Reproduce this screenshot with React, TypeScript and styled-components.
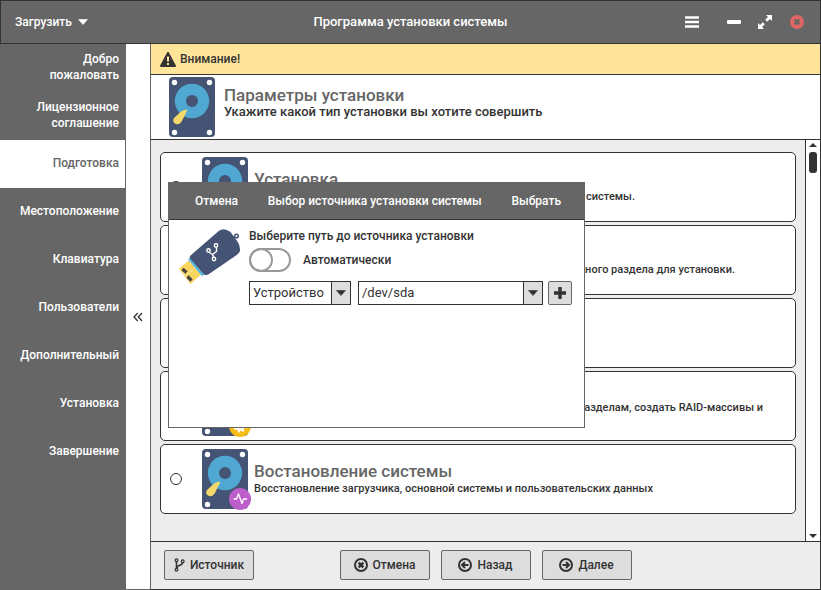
import React, { ReactNode, useState } from "react";
import styled, { createGlobalStyle } from "styled-components";

const ink = "#333333";
const gray = "#666666";
const panel = "#ededed";
const control = "#dddddd";

const GlobalStyle = createGlobalStyle`
  *, *::before, *::after { box-sizing: border-box; }
  html, body, #root { height: 100%; }
  body { margin: 0; background: #fff; }
  body, button, input, select {
    font-family: Roboto, "Noto Sans", sans-serif;
    font-size: 13px;
    font-weight: 500;
    line-height: 16px;
    color: ${ink};
  }
  h1, h2, p { margin: 0; }
  svg { display: block; flex: none; }
`;

const Window = styled.div`
  display: flex;
  flex-direction: column;
  height: 100%;
`;

const TitleBar = styled.header`
  display: grid;
  grid-template-columns: 1fr auto 1fr;
  align-items: center;
  flex: none;
  height: 44px;
  padding: 0 14px;
  color: #fff;
  background: ${gray};
  border: 1px solid ${ink};
`;

const PlainButton = styled.button`
  display: flex;
  align-items: center;
  gap: 6px;
  padding: 0;
  border: 0;
  background: none;
  font-size: 12px;
  color: inherit;
  cursor: pointer;
`;

const WindowTitle = styled.h1`
  font-size: 13px;
  font-weight: 500;
  line-height: 16px;
`;

const WindowControls = styled.div`
  display: flex;
  align-items: center;
  justify-content: flex-end;
  gap: 16px;
  padding-right: 1px;
`;

const MenuButton = styled(PlainButton)`
  margin-right: 12px;
`;

const Body = styled.div`
  display: flex;
  flex: 1;
  min-height: 0;
`;

const Sidebar = styled.nav`
  flex: none;
  width: 126px;
  background: ${gray};
  border-right: 1px solid ${gray};
`;

const Step = styled.a<{ $current?: boolean }>`
  display: flex;
  align-items: center;
  justify-content: flex-end;
  height: 48px;
  padding: 0 6px 2px 16px;
  font-size: 12px;
  text-align: right;
  text-decoration: none;
  color: ${(p) => (p.$current ? gray : "#fff")};
  background: ${(p) => (p.$current ? "#fff" : "transparent")};
`;

const Collapse = styled.button`
  display: flex;
  align-items: center;
  justify-content: center;
  flex: none;
  width: 24px;
  padding: 0;
  border: 0;
  border-bottom: 1px solid ${gray};
  background: #fff;
  cursor: pointer;
`;

const Main = styled.main`
  position: relative;
  display: flex;
  flex: 1;
  flex-direction: column;
  min-width: 0;
  background: ${panel};
  border: solid ${ink};
  border-width: 0 1px 1px 1px;
  border-left-color: ${gray};
`;

const Warning = styled.div`
  display: flex;
  align-items: center;
  gap: 4px;
  flex: none;
  height: 31px;
  padding: 0 9px;
  font-size: 12px;
  background: #ffe599;
  border-bottom: 1px solid ${ink};
`;

const Intro = styled.section`
  display: flex;
  gap: 9px;
  flex: none;
  height: 65px;
  padding: 2px 18px;
  background: #fff;
  border-bottom: 1px solid ${ink};
`;

const IntroText = styled.div`
  padding-top: 9px;
`;

const Heading = styled.h2`
  font-size: 17px;
  font-weight: 500;
  line-height: 18px;
  color: ${gray};
`;

const ScrollRow = styled.div`
  display: flex;
  flex: 1;
  min-height: 0;
`;

const Options = styled.div`
  display: flex;
  flex: 1;
  flex-direction: column;
  gap: 3px;
  min-width: 0;
  padding: 12px 9px;
  overflow: hidden;
`;

const Option = styled.label`
  display: flex;
  align-items: center;
  flex: none;
  height: 70px;
  padding: 0 9px;
  background: #fff;
  border: 1px solid ${ink};
  border-radius: 5px;
`;

const Radio = styled.input`
  appearance: none;
  flex: none;
  width: 12px;
  height: 12px;
  margin: 0 20px 0 0;
  border: 1px solid ${ink};
  border-radius: 50%;
  background: #fff;
  &:checked { background: ${ink}; }
`;

const DiskFrame = styled.span`
  position: relative;
  flex: none;
  width: 46px;
  height: 60px;
`;

const BadgeSlot = styled.span`
  position: absolute;
  right: -3px;
  bottom: -1px;
`;

const OptionText = styled.div`
  display: flex;
  flex-direction: column;
  gap: 1px;
  padding-left: 6px;
`;

const Description = styled.p<{ $width?: number; $lines?: number }>`
  width: ${(p) => (p.$width ? `${p.$width}px` : "auto")};
  min-height: ${(p) => (p.$lines ?? 1) * 16}px;
  text-align: ${(p) => (p.$width ? "right" : "left")};
  font-size: 11px;
  line-height: 16px;
`;

const Scrollbar = styled.div`
  display: flex;
  flex: none;
  flex-direction: column;
  align-items: center;
  width: 15px;
  padding: 3px 0;
  background: #fff;
  border-left: 1px solid ${ink};
`;

const Thumb = styled.div`
  width: 8px;
  height: 21px;
  margin: 5px 0 auto;
  border-radius: 3px;
  background: ${ink};
`;

const Footer = styled.footer`
  display: grid;
  grid-template-columns: 1fr auto 1fr;
  align-items: center;
  flex: none;
  height: 48px;
  padding: 0 13px 1px;
  border-top: 1px solid ${ink};
`;

const FooterActions = styled.div`
  display: flex;
  gap: 11px;
`;

const ActionButton = styled.button`
  display: flex;
  align-items: center;
  justify-content: center;
  gap: 5px;
  width: 90px;
  height: 30px;
  padding: 0;
  border: 1px solid ${gray};
  border-radius: 2px;
  background: ${control};
  font-size: 12px;
  cursor: pointer;
`;

const Dialog = styled.div`
  position: absolute;
  top: 138px;
  left: 17px;
  width: 417px;
  height: 246px;
  background: #fff;
  border: 1px solid ${gray};
`;

const DialogBar = styled.div`
  display: flex;
  align-items: center;
  justify-content: space-between;
  height: 37px;
  padding: 0 23px 0 26px;
  color: #fff;
  background: ${gray};
  border-bottom: 1px solid ${ink};
`;

const DialogTitle = styled.h2`
  font-size: 12px;
  font-weight: 500;
  line-height: 16px;
`;

const DialogBody = styled.div`
  display: flex;
  gap: 8px;
  padding: 8px 12px 0 9px;
  font-size: 12px;
`;

const Form = styled.div`
  flex: 1;
  min-width: 0;
`;

const SwitchRow = styled.label`
  display: flex;
  align-items: center;
  gap: 12px;
  margin-top: 4px;
`;

const Switch = styled.input`
  appearance: none;
  position: relative;
  width: 42px;
  height: 24px;
  margin: 0;
  border: 2px solid #999;
  border-radius: 12px;
  background: #fff;
  &::before {
    content: "";
    position: absolute;
    top: -2px;
    left: -2px;
    width: 24px;
    height: 24px;
    border: 2px solid #999;
    border-radius: 50%;
  }
  &:checked::before { left: 16px; }
`;

const SourceRow = styled.div`
  display: flex;
  align-items: center;
  gap: 7px;
  margin-top: 9px;
`;

const Picker = styled.div<{ $grow?: boolean }>`
  position: relative;
  display: flex;
  flex: ${(p) => (p.$grow ? "1" : "none")};
  width: 102px;
`;

const Select = styled.select`
  appearance: none;
  width: 100%;
  height: 24px;
  padding: 0 22px 0 3px;
  border: 1px solid ${ink};
  border-radius: 0;
  background: #fff;
  font-weight: 400;
`;

const PickerArrow = styled.span`
  position: absolute;
  top: 0;
  right: 0;
  display: flex;
  align-items: center;
  justify-content: center;
  width: 20px;
  height: 24px;
  border: 1px solid ${ink};
  background: ${control};
  pointer-events: none;
`;

const AddButton = styled.button`
  display: flex;
  align-items: center;
  justify-content: center;
  width: 24px;
  height: 24px;
  padding: 0;
  margin-left: -2px;
  border: 1px solid ${gray};
  border-radius: 2px;
  background: ${control};
`;

const Caret = () => (
  <svg width="10" height="6" viewBox="0 0 10 6" aria-hidden="true">
    <path d="M0.5 0.5H9.5L5 5.5Z" fill="currentColor" stroke="currentColor" strokeLinejoin="round" strokeWidth="0.6" />
  </svg>
);

const MiniArrow = ({ up }: { up?: boolean }) => (
  <svg width="8" height="4" viewBox="0 0 8 4" aria-hidden="true">
    <path d={up ? "M0 4L4 0L8 4Z" : "M0 0H8L4 4Z"} fill={ink} />
  </svg>
);

const HardDisk = ({ badge }: { badge?: ReactNode }) => (
  <DiskFrame>
    <svg width="46" height="60" viewBox="0 0 46 60" aria-hidden="true">
      <rect width="46" height="60" rx="4" fill="#455374" />
      {[[5.5, 5.5], [40.5, 5.5], [5.5, 55.5], [40.5, 55.5]].map(([x, y]) => (
        <circle key={`${x}-${y}`} cx={x} cy={y} r="2.7" fill="#fff" />
      ))}
      <circle cx="23" cy="24" r="17.2" fill="#50a8d2" />
      <circle cx="23" cy="24" r="6" fill="#455374" />
      <path d="M18.500 32.800C15.500 32.800 13.500 33.400 11.500 35L5 41C3.300 43.500 4.500 46.500 7.500 47.200C10 47.500 12 46 13.200 43.500Z" fill="#f5d86a" />
    </svg>
    {badge && <BadgeSlot>{badge}</BadgeSlot>}
  </DiskFrame>
);

const PulseBadge = () => (
  <svg width="22" height="22" viewBox="0 0 22 22" aria-hidden="true">
    <circle cx="11" cy="11" r="11" fill="#bd5fcb" />
    <path d="M4.500 11H7.500L9.500 6L13 15.500L14.500 11H18" fill="none" stroke="#fff" strokeWidth="1.3" strokeLinejoin="round" />
  </svg>
);

const GearBadge = () => (
  <svg width="22" height="22" viewBox="0 0 22 22" aria-hidden="true">
    <circle cx="11" cy="11" r="11" fill="#f5bd13" />
    <circle cx="11" cy="11" r="3.700" fill="none" stroke="#fff" strokeWidth="2.500" />
    <circle cx="11" cy="11" r="5.600" fill="none" stroke="#fff" strokeWidth="2" strokeDasharray="2.200 2.200" />
  </svg>
);

const UsbDrive = () => (
  <svg width="63" height="58" viewBox="0 0 63 58" aria-hidden="true">
    <circle cx="58.500" cy="8" r="1.800" fill="none" stroke="#455374" strokeWidth="1.500" />
    <path d="M1.500 40.500L11 33L22.500 46.500L12.500 55.500Z" fill="#f7d55f" stroke="#f7d55f" strokeLinejoin="round" />
    <path d="M7 48L17 40" stroke="#fff" strokeDasharray="1 1" />
    <path d="M4.500 41L8.500 44.500M9.500 48.500L13.500 52.500" stroke="#454540" strokeWidth="3.200" />
    <path d="M11 30.500L25 47.500" stroke="#55b9e6" strokeWidth="2.500" />
    <path d="M12.500 27.500L41 2.800Q46 -1 52.500 4L59.500 13.500Q62.500 18 62 23Q61.500 25 58 27.500L31 46Q27.500 48.500 25 45.500L12.500 31Q11 29 12.500 27.500Z" fill="#455374" />
    <g fill="none" stroke="#fff" strokeWidth="1.400">
      <circle cx="38" cy="17.500" r="1.700" />
      <circle cx="30.500" cy="22.500" r="1.700" />
      <circle cx="36" cy="31" r="1.700" />
      <path d="M38.500 19.500V23.500L34.500 26.500L35.500 29M31.500 24.500L34.500 26.500" />
    </g>
  </svg>
);

const RoundIcon = ({ kind }: { kind: "cancel" | "back" | "next" }) => (
  <svg width="14" height="14" viewBox="0 0 14 14" fill="none" stroke={ink} strokeWidth="2" aria-hidden="true">
    <circle cx="7" cy="7" r="6" />
    {kind === "cancel" && <path d="M4.700 4.700L9.300 9.300M9.300 4.700L4.700 9.300" strokeWidth="2.600" />}
    {kind === "back" && <path d="M10.500 7H4.500M7 4L4 7L7 10" />}
    {kind === "next" && <path d="M3.500 7H9.500M7 4L10 7L7 10" />}
  </svg>
);

const BranchIcon = () => (
  <svg width="11" height="14" viewBox="0 0 11 14" fill="none" stroke={ink} strokeWidth="1.200" aria-hidden="true">
    <circle cx="2.500" cy="2.200" r="1.400" />
    <circle cx="2.500" cy="11.800" r="1.400" />
    <circle cx="8.700" cy="3.200" r="1.400" />
    <path d="M2.500 3.600V10.400M8.700 4.600C8.700 8 3 6.500 2.800 10" strokeWidth="1.600" />
  </svg>
);

const steps = [
  "Добро пожаловать",
  "Лицензионное соглашение",
  "Подготовка",
  "Местоположение",
  "Клавиатура",
  "Пользователи",
  "Дополнительный",
  "Установка",
  "Завершение",
];

type OptionItem = {
  id: string;
  title: string;
  text: string;
  width?: number;
  lines?: number;
  badge?: ReactNode;
};

const options: OptionItem[] = [
  { id: "install", title: "Установка", text: "системы.", width: 381 },
  { id: "partition", title: "Раздел", text: "одного раздела для установки.", width: 481 },
  { id: "nearby", title: "Рядом", text: "Рядом с системой" },
  { id: "expert", title: "Вручную", text: "разделам, создать RAID-массивы и", width: 509, lines: 2, badge: <GearBadge /> },
  { id: "restore", title: "Востановление системы", text: "Восстановление загрузчика, основной системы и пользовательских данных", badge: <PulseBadge /> },
];

export default function App() {
  const [choice, setChoice] = useState("");
  return (
    <>
      <GlobalStyle />
      <Window>
        <TitleBar>
          <PlainButton type="button">Загрузить <Caret /></PlainButton>
          <WindowTitle>Программа установки системы</WindowTitle>
          <WindowControls>
            <MenuButton type="button" aria-label="Меню">
              <svg width="14" height="12" viewBox="0 0 14 12"><path d="M0 1.500H14M0 6H14M0 10.500H14" stroke="#fff" strokeWidth="2.400" /></svg>
            </MenuButton>
            <PlainButton type="button" aria-label="Свернуть">
              <svg width="14" height="4" viewBox="0 0 14 4"><rect width="14" height="4" rx="1" fill="#fff" /></svg>
            </PlainButton>
            <PlainButton type="button" aria-label="Развернуть">
              <svg width="16" height="14" viewBox="0 0 16 14"><path d="M9 0H15V6L13 4L10.200 6.800L8.200 4.800L11 2ZM1 14V8L3 10L5.800 7.200L7.800 9.200L5 12L7 14Z" fill="#fff" /></svg>
            </PlainButton>
            <PlainButton type="button" aria-label="Закрыть">
              <svg width="16" height="14" viewBox="0 0 16 14"><circle cx="8" cy="7" r="7" fill="#e06666" /><path d="M5.700 4.700L10.300 9.300M10.300 4.700L5.700 9.300" stroke={gray} strokeWidth="2.400" /></svg>
            </PlainButton>
          </WindowControls>
        </TitleBar>
        <Body>
          <Sidebar>
            {steps.map((s) => (
              <Step key={s} href="#" $current={s === "Подготовка"}>{s}</Step>
            ))}
          </Sidebar>
          <Collapse type="button" aria-label="Свернуть панель">
            <svg width="10" height="10" viewBox="0 0 10 10"><path d="M4.700 1L1 5L4.700 9M9 1L5.300 5L9 9" fill="none" stroke={ink} strokeWidth="1.300" /></svg>
          </Collapse>
          <Main>
            <Warning>
              <svg width="16" height="15" viewBox="0 0 16 15" aria-hidden="true">
                <path d="M8 1L15 14H1Z" fill={ink} stroke={ink} strokeWidth="2" strokeLinejoin="round" />
                <path d="M8 4.500V9.500M8 11V13" stroke="#ffe599" strokeWidth="2" />
              </svg>
              Внимание!
            </Warning>
            <Intro>
              <HardDisk />
              <IntroText>
                <Heading>Параметры установки</Heading>
                <p>Укажите какой тип установки вы хотите совершить</p>
              </IntroText>
            </Intro>
            <ScrollRow>
              <Options role="radiogroup" aria-label="Тип установки">
                {options.map((o) => (
                  <Option key={o.id}>
                    <Radio type="radio" name="mode" checked={choice === o.id} onChange={() => setChoice(o.id)} />
                    <HardDisk badge={o.badge} />
                    <OptionText>
                      <Heading as="span">{o.title}</Heading>
                      <Description $width={o.width} $lines={o.lines}>{o.text}</Description>
                    </OptionText>
                  </Option>
                ))}
              </Options>
              <Scrollbar>
                <MiniArrow up />
                <Thumb />
                <MiniArrow />
              </Scrollbar>
            </ScrollRow>
            <Footer>
              <ActionButton type="button"><BranchIcon />Источник</ActionButton>
              <FooterActions>
                <ActionButton type="button"><RoundIcon kind="cancel" />Отмена</ActionButton>
                <ActionButton type="button"><RoundIcon kind="back" />Назад</ActionButton>
                <ActionButton type="button"><RoundIcon kind="next" />Далее</ActionButton>
              </FooterActions>
            </Footer>
            <Dialog role="dialog" aria-labelledby="source-title">
              <DialogBar>
                <PlainButton type="button">Отмена</PlainButton>
                <DialogTitle id="source-title">Выбор источника установки системы</DialogTitle>
                <PlainButton type="button">Выбрать</PlainButton>
              </DialogBar>
              <DialogBody>
                <UsbDrive />
                <Form>
                  <p>Выберите путь до источника установки</p>
                  <SwitchRow>
                    <Switch type="checkbox" role="switch" />
                    Автоматически
                  </SwitchRow>
                  <SourceRow>
                    <Picker>
                      <Select aria-label="Тип источника"><option>Устройство</option></Select>
                      <PickerArrow><Caret /></PickerArrow>
                    </Picker>
                    <Picker $grow>
                      <Select aria-label="Путь"><option>/dev/sda</option></Select>
                      <PickerArrow><Caret /></PickerArrow>
                    </Picker>
                    <AddButton type="button" aria-label="Добавить">
                      <svg width="12" height="12" viewBox="0 0 12 12"><path d="M6 0V12M0 6H12" stroke={ink} strokeWidth="3.400" /></svg>
                    </AddButton>
                  </SourceRow>
                </Form>
              </DialogBody>
            </Dialog>
          </Main>
        </Body>
      </Window>
    </>
  );
}
